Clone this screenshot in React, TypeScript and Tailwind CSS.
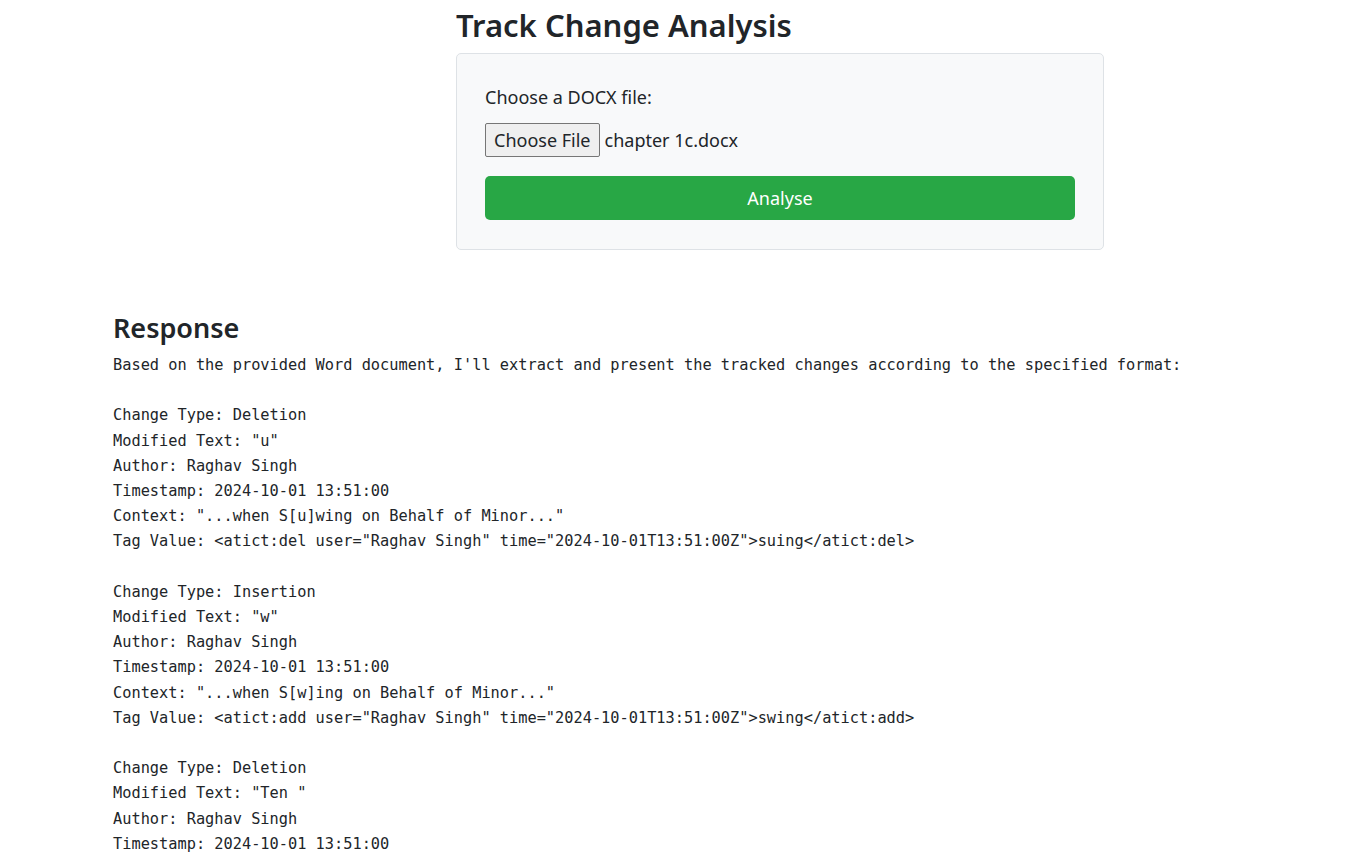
import React from 'react';

const SANS = { fontFamily: '"Noto Sans", "Open Sans", Arial, sans-serif' };

const RESPONSE = `Based on the provided Word document, I'll extract and present the tracked changes according to the specified format:

Change Type: Deletion
Modified Text: "u"
Author: Raghav Singh
Timestamp: 2024-10-01 13:51:00
Context: "...when S[u]wing on Behalf of Minor..."
Tag Value: <atict:del user="Raghav Singh" time="2024-10-01T13:51:00Z">suing</atict:del>

Change Type: Insertion
Modified Text: "w"
Author: Raghav Singh
Timestamp: 2024-10-01 13:51:00
Context: "...when S[w]ing on Behalf of Minor..."
Tag Value: <atict:add user="Raghav Singh" time="2024-10-01T13:51:00Z">swing</atict:add>

Change Type: Deletion
Modified Text: "Ten "
Author: Raghav Singh
Timestamp: 2024-10-01 13:51:00`;

export default function App() {
  return (
    <div className="min-h-screen bg-white text-[#212529] overflow-hidden" style={SANS}>
      <div className="ml-[456px] w-[648px]">
        <h2 className="pt-[3px] text-[31px] leading-[44px] font-semibold mb-[6px]">Track Change Analysis</h2>
        <div className="bg-[#f8f9fa] border border-[#dee2e6] rounded-[5px] px-[28px] pt-[29px] pb-[29px]">
          <label className="block text-[18px] leading-[28px] mb-[12px]">Choose a DOCX file:</label>
          <div className="flex items-center gap-[5px] text-[18px]">
            <button className="h-[34px] px-[8px] bg-[#efefef] border border-[#767676] rounded-[2px] text-[18px] leading-none">
              Choose File
            </button>
            <span>chapter 1c.docx</span>
          </div>
          <button className="mt-[19px] w-full h-[44px] bg-[#28a745] text-white rounded-[5px] text-[18px]">
            Analyse
          </button>
        </div>
      </div>
      <div className="ml-[113px] mr-[112px] mt-[61px]">
        <h3 className="text-[27px] leading-[34px] font-semibold mb-[8px]">Response</h3>
        <pre
          className="whitespace-pre text-[15.3px] leading-[25.2px] text-[#212529]"
          style={{ fontFamily: '"DejaVu Sans Mono", "Liberation Mono", monospace' }}
        >
          {RESPONSE}
        </pre>
      </div>
    </div>
  );
}
